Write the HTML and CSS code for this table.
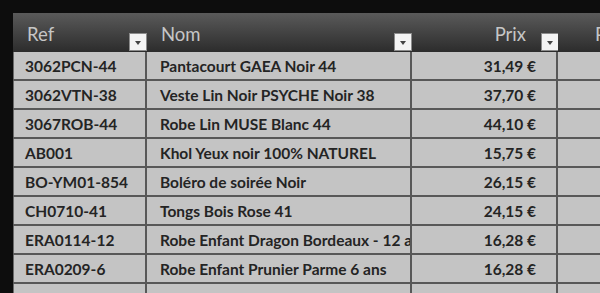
FILE: index.html
```html
<!DOCTYPE html>
<html lang="fr">
<head>
<meta charset="utf-8">
<title>Tableau</title>
<link rel="stylesheet" href="styles.css">
</head>
<body>
<div class="sheet">
  <div class="table">
    <div class="row head">
      <div class="cell c1"><span>Ref</span><span class="dd"></span></div>
      <div class="cell c2"><span>Nom</span><span class="dd"></span></div>
      <div class="cell c3 num"><span>Prix</span><span class="dd"></span></div>
      <div class="cell c4"><span>Poids</span></div>
    </div>
    <div class="row"><div class="cell c1">3062PCN-44</div><div class="cell c2">Pantacourt GAEA Noir 44</div><div class="cell c3 num">31,49 €</div><div class="cell c4"></div></div>
    <div class="row"><div class="cell c1">3062VTN-38</div><div class="cell c2">Veste Lin Noir PSYCHE Noir 38</div><div class="cell c3 num">37,70 €</div><div class="cell c4"></div></div>
    <div class="row"><div class="cell c1">3067ROB-44</div><div class="cell c2">Robe Lin MUSE Blanc 44</div><div class="cell c3 num">44,10 €</div><div class="cell c4"></div></div>
    <div class="row"><div class="cell c1">AB001</div><div class="cell c2">Khol Yeux noir 100% NATUREL</div><div class="cell c3 num">15,75 €</div><div class="cell c4"></div></div>
    <div class="row"><div class="cell c1">BO-YM01-854</div><div class="cell c2">Boléro de soirée Noir</div><div class="cell c3 num">26,15 €</div><div class="cell c4"></div></div>
    <div class="row"><div class="cell c1">CH0710-41</div><div class="cell c2">Tongs Bois Rose 41</div><div class="cell c3 num">24,15 €</div><div class="cell c4"></div></div>
    <div class="row"><div class="cell c1">ERA0114-12</div><div class="cell c2">Robe Enfant Dragon Bordeaux - 12 ans</div><div class="cell c3 num">16,28 €</div><div class="cell c4"></div></div>
    <div class="row"><div class="cell c1">ERA0209-6</div><div class="cell c2">Robe Enfant Prunier Parme 6 ans</div><div class="cell c3 num">16,28 €</div><div class="cell c4"></div></div>
    <div class="row"><div class="cell c1"></div><div class="cell c2"></div><div class="cell c3 num"></div><div class="cell c4"></div></div>
  </div>
</div>
</body>
</html>
```
FILE: styles.css
```css
html, body {
  margin: 0;
  padding: 0;
  background: #0d0d0d;
  overflow: hidden;
}
.sheet {
  padding: 13px 0 0 13px;
  width: 700px;
}
.table {
  display: flex;
  flex-direction: column;
  font-family: Lato, "Open Sans", sans-serif;
}
.row {
  display: flex;
  height: 29px;
  box-sizing: border-box;
  border-bottom: 2px solid #585858;
  background: #c4c4c4;
}
.cell {
  box-sizing: border-box;
  flex: none;
  height: 100%;
  display: flex;
  align-items: center;
  font-weight: 700;
  font-size: 15.5px;
  color: #242424;
  border-right: 2px solid #585858;
  white-space: nowrap;
  overflow: hidden;
}
.c1 { width: 134px; padding-left: 11px; border-left: 1px solid #6a6a6a; }
.c2 { width: 265px; padding-left: 13px; }
.c3 { width: 146px; justify-content: flex-end; padding-right: 20px; }
.c4 { width: 150px; border-right: none; }

.head {
  height: 39px;
  border-bottom: none;
  background: linear-gradient(#5a5a5a, #2c2c2c);
}
.head .cell {
  position: relative;
  font-weight: 400;
  font-size: 18.5px;
  color: #c6c6c6;
  border-right: none;
  border-left: none;
  padding-top: 2px;
}
.head .c1 { padding-left: 14px; }
.head .c2 { padding-left: 14px; }
.head .c3 { padding-right: 32px; }
.head .c4 { padding-left: 37px; }
.dd {
  position: absolute;
  right: 0;
  bottom: 1px;
  width: 18px;
  height: 18px;
  box-sizing: border-box;
  background: #f4f4f4;
  border: 1px solid #8c8c8c;
}
.head .c3 .dd { right: -1px; }
.dd::after {
  content: "";
  position: absolute;
  left: 5px;
  top: 7px;
  border-left: 3.5px solid transparent;
  border-right: 3.5px solid transparent;
  border-top: 4px solid #444;
}
```
